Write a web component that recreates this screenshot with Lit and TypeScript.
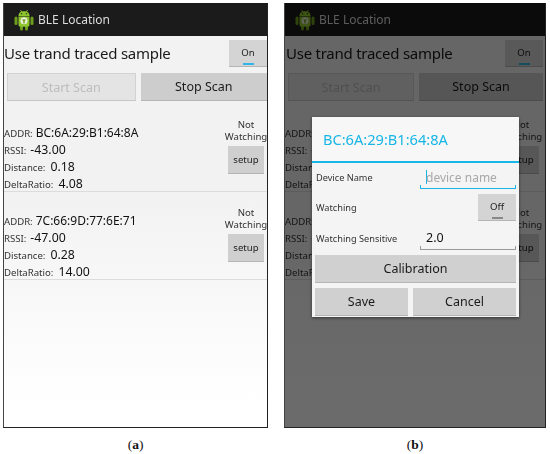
import { LitElement, html, css, svg } from "lit";
import { customElement, property } from "lit/decorators.js";

const androidIcon = svg`
<svg class="logo" viewBox="0 0 20 22" width="20" height="22" aria-hidden="true">
  <rect x="0.5" y="7.5" width="3" height="8.5" rx="1.5" fill="#6f9e1c"/>
  <rect x="16.5" y="7.5" width="3" height="8.5" rx="1.5" fill="#6f9e1c"/>
  <rect x="6" y="16" width="3" height="5.5" rx="1.5" fill="#6f9e1c"/>
  <rect x="11" y="16" width="3" height="5.5" rx="1.5" fill="#6f9e1c"/>
  <path d="M6.5 1 L8 3.4 M13.5 1 L12 3.4" stroke="#9fcf3c" stroke-width="0.8" fill="none"/>
  <path d="M4.5 7 C4.5 3.6 7 2.2 10 2.2 C13 2.2 15.5 3.6 15.5 7 Z" fill="#8fc62e"/>
  <path d="M4.5 7.6 H15.5 V16 Q15.5 17.8 13.6 17.8 H6.4 Q4.5 17.8 4.5 16 Z" fill="#8fc62e"/>
  <circle cx="7.6" cy="4.8" r="0.7" fill="#263310"/>
  <circle cx="12.4" cy="4.8" r="0.7" fill="#263310"/>
  <circle cx="10" cy="11.8" r="3.5" fill="#e9f1d6"/>
  <path d="M7.8 10.6 H12.2 L10.7 12 V14.4 H9.3 V12 Z" fill="#6f9e1c"/>
</svg>`;

@customElement("ble-item")
class BleItem extends LitElement {
  @property() addr = "";
  @property() rssi = "";
  @property() distance = "";
  @property() ratio = "";

  static styles = css`
    :host {
      display: flex;
      height: 88px;
      box-sizing: border-box;
      border-bottom: 1px solid #dcdcdc;
      justify-content: space-between;
      color: #222;
    }
    .data {
      padding-top: 20px;
    }
    .line {
      display: flex;
      align-items: baseline;
      height: 17px;
      line-height: 17px;
      white-space: nowrap;
    }
    .k {
      font-size: 9.6px;
      color: #333;
    }
    .v {
      font-size: 12.3px;
      color: #111;
      margin-left: 5px;
    }
    .addr {
      font-size: 12px;
      margin-left: 3px;
    }
    .rssi { margin-left: 4px; }
    .side {
      width: 40px;
      margin-right: 1px;
      padding-top: 15px;
      display: flex;
      flex-direction: column;
      align-items: center;
      font-size: 9.6px;
      line-height: 12px;
      text-align: center;
      color: #333;
    }
    .setup {
      margin-top: 3px;
      width: 36px;
      height: 28px;
      background: #cfcfcf;
      border-bottom: 1px solid #b5b5b5;
      box-sizing: border-box;
      display: flex;
      align-items: center;
      justify-content: center;
      font-size: 9.6px;
      color: #222;
    }
  `;

  render() {
    return html`
      <div class="data">
        <div class="line"><span class="k">ADDR:</span><span class="v addr">${this.addr}</span></div>
        <div class="line"><span class="k">RSSI:</span><span class="v rssi">${this.rssi}</span></div>
        <div class="line"><span class="k">Distance:</span><span class="v">${this.distance}</span></div>
        <div class="line"><span class="k">DeltaRatio:</span><span class="v">${this.ratio}</span></div>
      </div>
      <div class="side">
        <div>Not<br />Watching</div>
        <div class="setup">setup</div>
      </div>
    `;
  }
}

@customElement("phone-screen")
class PhoneScreen extends LitElement {
  static styles = css`
    :host {
      display: flex;
      flex-direction: column;
      position: relative;
      height: 425px;
      box-sizing: border-box;
      border-left: 1px solid #444;
      border-right: 1px solid #222;
      border-bottom: 1px solid #222;
      background: linear-gradient(#f2f2f2 0, #f2f2f2 190px, #ffffff 400px);
      overflow: hidden;
      filter: blur(0.3px);
    }
    .bar {
      height: 33px;
      background: #1b1b1b;
      display: flex;
      align-items: center;
      padding-left: 10px;
      gap: 4px;
      flex: none;
      color: #dcdcdc;
      font-size: 12px;
    }
    .logo { flex: none; }
    .top {
      display: flex;
      justify-content: space-between;
      align-items: flex-start;
      padding: 4px 0 0 0;
      height: 33px;
      flex: none;
    }
    :host([modal]) .top { padding-right: 2px; padding-left: 1px; }
    .use {
      font-size: 15px;
      letter-spacing: -0.25px;
      line-height: 27px;
      color: #1a1a1a;
      white-space: nowrap;
    }
    .toggle {
      width: 38px;
      height: 27px;
      box-sizing: border-box;
      background: #d4d4d4;
      border-bottom: 1px solid #b5b5b5;
      display: flex;
      flex-direction: column;
      align-items: center;
      padding-top: 6px;
      font-size: 9.6px;
      color: #222;
    }
    .toggle i {
      display: block;
      width: 11px;
      height: 2px;
      margin-top: 4px;
    }
    .on i { background: #33b5e5; }
    .off i { background: #888; }
    .scan {
      display: flex;
      gap: 5px;
      padding: 0 0 0 3px;
      height: 28px;
      flex: none;
    }
    :host([modal]) .scan { padding-right: 2px; }
    .scan div {
      flex: 1;
      display: flex;
      align-items: center;
      justify-content: center;
      font-size: 12.5px;
      box-sizing: border-box;
    }
    .start {
      color: #bdbdbd;
      background: #e4e4e4;
      border: 1px solid #d2d2d2;
      border-bottom-color: #c6c6c6;
    }
    .stop {
      color: #1a1a1a;
      background: #cdcdcd;
      border-bottom: 1px solid #b5b5b5;
    }
    .list { margin-top: 3px; }
    :host([modal]) ble-item { padding-right: 3px; }
    .shade {
      position: absolute;
      inset: 0;
      background: rgba(0, 0, 0, 0.58);
    }
    .dialog {
      position: absolute;
      left: 27px;
      top: 114px;
      width: 207px;
      height: 200px;
      box-sizing: border-box;
      background: #f4f4f4;
      box-shadow: 0 1px 3px rgba(0, 0, 0, 0.5);
      display: flex;
      flex-direction: column;
    }
    .dtitle {
      height: 44px;
      flex: none;
      box-sizing: border-box;
      padding: 0 0 0 11px;
      display: flex;
      align-items: center;
      font-size: 14.6px;
      color: #17b6e6;
      background: #f7f7f7;
    }
    .rule {
      height: 2px;
      flex: none;
      background: #17b6e6;
    }
    .drow {
      display: flex;
      align-items: center;
      justify-content: space-between;
      padding: 0 3px 0 4px;
      font-size: 9.2px;
      color: #333;
    }
    .r1 { height: 29px; }
    .r2 { height: 31px; }
    .r3 { height: 30px; }
    .field {
      width: 96px;
      height: 23px;
      box-sizing: border-box;
      display: flex;
      align-items: center;
      padding-left: 6px;
      font-size: 12px;
      position: relative;
      border-bottom: 1px solid #9a9a9a;
    }
    .field::before, .field::after {
      content: "";
      position: absolute;
      bottom: 0;
      width: 1px;
      height: 3px;
      background: #9a9a9a;
    }
    .field::before { left: 0; }
    .field::after { right: 0; }
    .focus { border-bottom-color: #17b6e6; }
    .focus::before, .focus::after { background: #17b6e6; }
    .ph { color: #a8a8a8; }
    .caret {
      display: inline-block;
      width: 1px;
      height: 14px;
      background: #17b6e6;
      margin-right: -1px;
    }
    .val { color: #111; font-size: 12.5px; }
    .dbtns {
      padding: 0 3px;
      display: flex;
      flex-direction: column;
      gap: 5px;
      margin-top: 2px;
    }
    .dbtns > div { display: flex; gap: 5px; }
    .dbtn {
      flex: 1;
      height: 28px;
      box-sizing: border-box;
      background: #d0d0d0;
      border-bottom: 1px solid #b5b5b5;
      display: flex;
      align-items: center;
      justify-content: center;
      font-size: 12.5px;
      color: #1a1a1a;
    }
    .save { flex: 93; }
    .cancel { flex: 103; }
  `;

  @property({ type: Boolean }) modal = false;

  render() {
    return html`
      <div class="bar">${androidIcon}<span>BLE Location</span></div>
      <div class="top">
        <div class="use">Use trand traced sample</div>
        <div class="toggle on">On<i></i></div>
      </div>
      <div class="scan">
        <div class="start">Start Scan</div>
        <div class="stop">Stop Scan</div>
      </div>
      <div class="list">
        <ble-item addr="BC:6A:29:B1:64:8A" rssi="-43.00" distance="0.18" ratio="4.08"></ble-item>
        <ble-item addr="7C:66:9D:77:6E:71" rssi="-47.00" distance="0.28" ratio="14.00"></ble-item>
      </div>
      ${this.modal
        ? html`<div class="shade"></div>
            <div class="dialog">
              <div class="dtitle">BC:6A:29:B1:64:8A</div>
              <div class="rule"></div>
              <div class="drow r1">
                <span>Device Name</span>
                <div class="field focus"><span class="caret"></span><span class="ph">device name</span></div>
              </div>
              <div class="drow r2">
                <span>Watching</span>
                <div class="toggle off">Off<i></i></div>
              </div>
              <div class="drow r3">
                <span>Watching Sensitive</span>
                <div class="field"><span class="val">2.0</span></div>
              </div>
              <div class="dbtns">
                <div><div class="dbtn">Calibration</div></div>
                <div><div class="dbtn save">Save</div><div class="dbtn cancel">Cancel</div></div>
              </div>
            </div>`
        : ""}
    `;
  }
}

@customElement("app-root")
class AppRoot extends LitElement {
  static styles = css`
    :host {
      display: grid;
      grid-template-columns: 265px 262px;
      column-gap: 16px;
      box-sizing: border-box;
      width: 550px;
      height: 454px;
      padding: 3px 0 0 3px;
      background: #fff;
      font-family: "Noto Sans", "Open Sans", sans-serif;
    }
    figure {
      margin: 0;
    }
    .cap {
      font-family: "Liberation Serif", serif;
      font-size: 13.5px;
      color: #111;
      text-align: center;
      margin-top: 9px;
    }
  `;

  render() {
    return html`
      <figure>
        <phone-screen></phone-screen>
        <figcaption class="cap">(<b>a</b>)</figcaption>
      </figure>
      <figure>
        <phone-screen modal></phone-screen>
        <figcaption class="cap">(<b>b</b>)</figcaption>
      </figure>
    `;
  }
}
